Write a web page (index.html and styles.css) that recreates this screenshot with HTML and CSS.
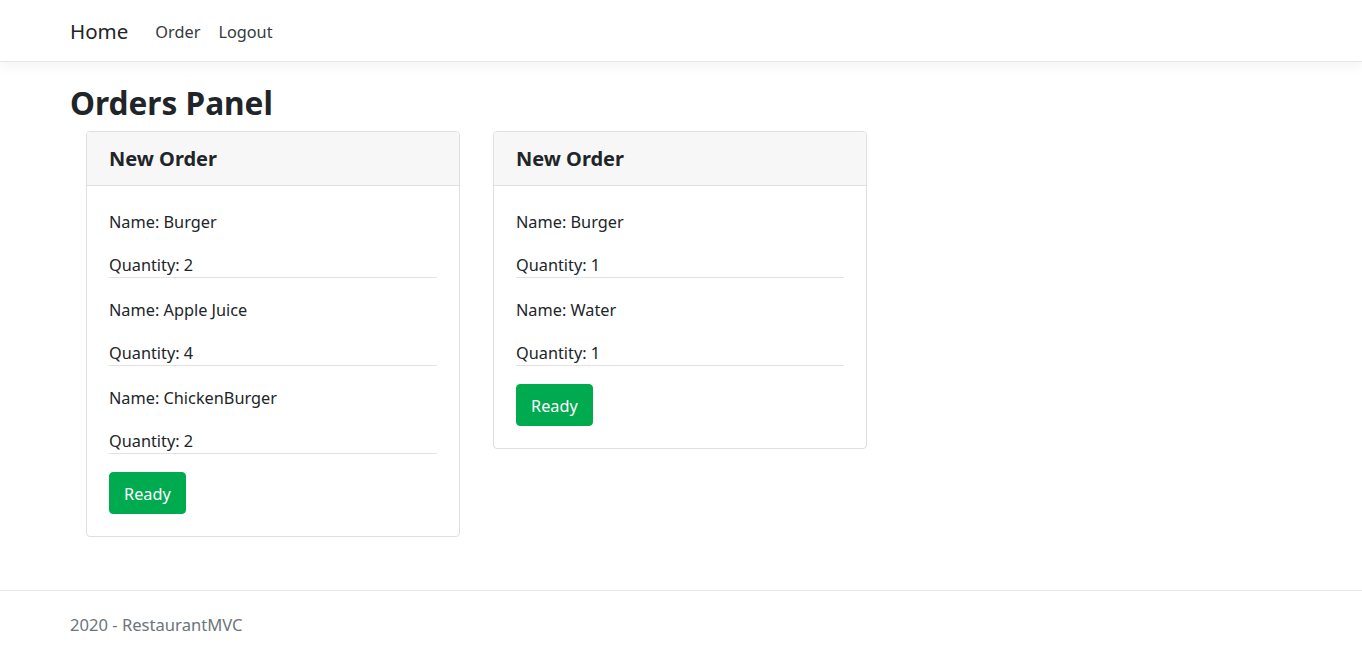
FILE: index.html
```html
<!DOCTYPE html>
<html lang="en">
<head>
<meta charset="utf-8">
<title>Orders Panel - RestaurantMVC</title>
<link rel="stylesheet" href="styles.css">
</head>
<body>
<header class="navbar">
  <a class="brand" href="#">Home</a>
  <nav class="nav">
    <a class="nav-link" href="#">Order</a>
    <a class="nav-link" href="#">Logout</a>
  </nav>
</header>
<main class="main">
  <h1 class="title">Orders Panel</h1>
  <div class="orders">
    <div class="card">
      <div class="card-header">New Order</div>
      <div class="card-body">
        <div class="item">
          <p class="line">Name: Burger</p>
          <p class="line qty">Quantity: 2</p>
        </div>
        <div class="item">
          <p class="line">Name: Apple Juice</p>
          <p class="line qty">Quantity: 4</p>
        </div>
        <div class="item">
          <p class="line">Name: ChickenBurger</p>
          <p class="line qty">Quantity: 2</p>
        </div>
        <button class="btn">Ready</button>
      </div>
    </div>
    <div class="card">
      <div class="card-header">New Order</div>
      <div class="card-body">
        <div class="item">
          <p class="line">Name: Burger</p>
          <p class="line qty">Quantity: 1</p>
        </div>
        <div class="item">
          <p class="line">Name: Water</p>
          <p class="line qty">Quantity: 1</p>
        </div>
        <button class="btn">Ready</button>
      </div>
    </div>
  </div>
</main>
<footer class="footer">2020 - RestaurantMVC</footer>
</body>
</html>
```
FILE: styles.css
```css
html, body {
  margin: 0;
  padding: 0;
}
body {
  font-family: "Noto Sans", "Open Sans", sans-serif;
  font-size: 16.3px;
  color: #212529;
  background: #fff;
  min-height: 100vh;
  display: flex;
  flex-direction: column;
}
.navbar {
  height: 61px;
  border-bottom: 1px solid #e3e6ea;
  box-shadow: 0 4px 12px rgba(0, 0, 0, 0.05);
  display: flex;
  align-items: center;
  padding-left: 70px;
  flex-shrink: 0;
}
.brand {
  font-size: 20.5px;
  color: #212529;
  text-decoration: none;
  margin-right: 18px;
  padding-top: 1px;
}
.nav {
  display: flex;
  padding-top: 2px;
}
.nav-link {
  color: #343a40;
  text-decoration: none;
  padding: 0 9px;
}
.main {
  padding: 0 70px;
  flex: 1 0 auto;
}
.title {
  font-size: 31.6px;
  line-height: 36px;
  font-weight: 700;
  margin: 23px 0 10px;
}
.orders {
  display: flex;
  align-items: flex-start;
  gap: 33px;
  padding-left: 16px;
}
.card {
  width: 374px;
  box-sizing: border-box;
  border: 1px solid #dfdfdf;
  border-radius: 4px;
  overflow: hidden;
}
.card-header {
  background: #f7f7f7;
  border-bottom: 1px solid #dfdfdf;
  height: 52px;
  line-height: 52px;
  padding: 1px 22px 0;
  font-size: 20px;
  font-weight: 700;
}
.card-body {
  padding: 24px 22px 22px;
}
.item {
  border-bottom: 1px solid #e2e2e2;
  margin-bottom: 20px;
}
.line {
  margin: 0;
  line-height: 24px;
}
.qty {
  margin-top: 19px;
}
.item:last-of-type {
  margin-bottom: 18px;
}
.btn {
  display: block;
  font-family: inherit;
  font-size: 16.3px;
  line-height: 26px;
  height: 42px;
  padding: 2px 14px 0;
  color: #fff;
  background: #00aa4f;
  border: 1px solid #00aa4f;
  border-radius: 4px;
}
.footer {
  flex-shrink: 0;
  border-top: 1px solid #e3e6ea;
  height: 59px;
  line-height: 59px;
  padding: 4px 70px 0;
  color: #6c757d;
  font-size: 16.6px;
}
```
